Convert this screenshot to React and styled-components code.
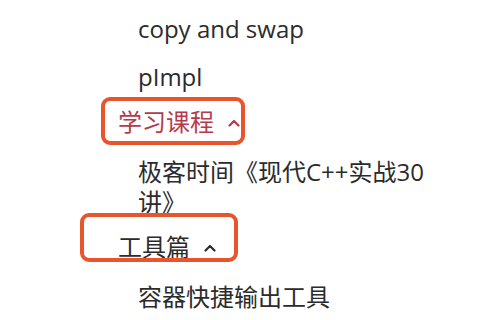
import React from 'react';
import styled, { createGlobalStyle } from 'styled-components';

const GlobalStyle = createGlobalStyle`
    html, body {
        margin: 0;
        padding: 0;
        background: #ffffff;
    }
    body {
        font-family: "Open Sans", "Noto Sans CJK SC", sans-serif;
        -webkit-font-smoothing: antialiased;
    }
`

const sections = [
    { type: 'leaf', text: 'copy and swap' },
    { type: 'leaf', text: 'pImpl' },
    { type: 'header', text: '学习课程', active: true, mark: { top: -10, left: -17, right: -5, bottom: -8 } },
    { type: 'leaf', text: '极客时间《现代C++实战30讲》' },
    { type: 'header', text: '工具篇', mark: { top: -19, left: -38, right: -22, bottom: 0 } },
    { type: 'leaf', text: '容器快捷输出工具' },
]

const Chevron = ({ color }) => (
    <svg width="12" height="8" viewBox="0 0 12 8" fill="none">
        <polyline points="1.5,6.5 6,2 10.5,6.5" stroke={color} strokeWidth="2.2"
            strokeLinecap="round" strokeLinejoin="round" />
    </svg>
)

const App = () => {
    return (
        <>
            <GlobalStyle />
            <Nav>
                {sections.map((item, i) => item.type === 'leaf' ? (
                    <Leaf key={i}>{item.text}</Leaf>
                ) : (
                    <HeaderRow key={i}>
                        <HeaderLabel $active={item.active}>
                            {item.text}
                            <Chevron color={item.active ? '#b63a4c' : '#2b2b2b'} />
                            <Mark $inset={item.mark} />
                        </HeaderLabel>
                    </HeaderRow>
                ))}
            </Nav>
        </>
    );
};

export default App;

const Nav = styled.nav`
    display: flex;
    flex-direction: column;
    width: 480px;
    height: 320px;
    box-sizing: border-box;
    padding: 5px 36px 0 0;
    overflow: hidden;
    font-size: 24px;
    line-height: 30px;
    color: #2b2b2b;
`

const Leaf = styled.div`
    padding: 9px 0 9px 138px;
`

const HeaderRow = styled.div`
    padding: 6px 0 11px 118px;
`

const HeaderLabel = styled.div`
    position: relative;
    display: inline-flex;
    align-items: center;
    gap: 14px;
    color: ${p => p.$active ? '#b63a4c' : '#2b2b2b'};
    svg{
        margin-top: 2px;
    }
`

const Mark = styled.span`
    position: absolute;
    top: ${p => p.$inset.top}px;
    left: ${p => p.$inset.left}px;
    right: ${p => p.$inset.right}px;
    bottom: ${p => p.$inset.bottom}px;
    border: 4px solid #e8552c;
    border-radius: 9px;
    pointer-events: none;
`
